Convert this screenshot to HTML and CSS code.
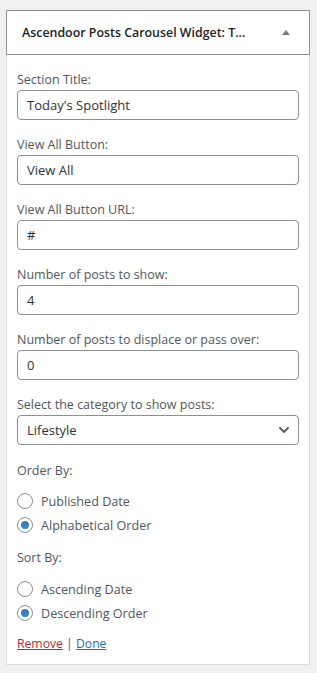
FILE: index.html
```html
<!DOCTYPE html>
<html lang="en">
<head>
<meta charset="utf-8">
<title>Widget</title>
<link rel="stylesheet" href="styles.css">
</head>
<body>
<div class="widget">
  <div class="widget-top">
    <h3 class="widget-title">Ascendoor Posts Carousel Widget: T...</h3>
    <span class="toggle"><svg width="8" height="5" viewBox="0 0 8 5"><path d="M0 5 L4 0 L8 5 Z" fill="#787c82"/></svg></span>
  </div>
  <div class="widget-inside">
    <div class="field">
      <label class="lbl">Section Title:</label>
      <div class="input">Today's Spotlight</div>
    </div>
    <div class="field">
      <label class="lbl">View All Button:</label>
      <div class="input">View All</div>
    </div>
    <div class="field">
      <label class="lbl">View All Button URL:</label>
      <div class="input">#</div>
    </div>
    <div class="field">
      <label class="lbl">Number of posts to show:</label>
      <div class="input">4</div>
    </div>
    <div class="field">
      <label class="lbl">Number of posts to displace or pass over:</label>
      <div class="input">0</div>
    </div>
    <div class="field">
      <label class="lbl">Select the category to show posts:</label>
      <div class="input select"><span>Lifestyle</span>
        <svg width="12" height="8" viewBox="0 0 12 8"><path d="M1.5 1.5 L6 6 L10.5 1.5" fill="none" stroke="#50575e" stroke-width="1.8"/></svg>
      </div>
    </div>
    <div class="group first">
      <div class="lbl">Order By:</div>
      <div class="radios">
        <div class="radio-row"><span class="radio"></span><span>Published Date</span></div>
        <div class="radio-row"><span class="radio checked"></span><span>Alphabetical Order</span></div>
      </div>
    </div>
    <div class="group">
      <div class="lbl">Sort By:</div>
      <div class="radios">
        <div class="radio-row"><span class="radio"></span><span>Ascending Date</span></div>
        <div class="radio-row"><span class="radio checked"></span><span>Descending Order</span></div>
      </div>
    </div>
    <div class="actions"><a class="remove" href="#">Remove</a> <span class="sep">|</span> <a class="done" href="#">Done</a></div>
  </div>
</div>
</body>
</html>
```
FILE: styles.css
```css
html, body {
  margin: 0;
  padding: 0;
  background: #f0f0f1;
}
body {
  padding: 10px 7px 0 6px;
  font-family: "Open Sans", "Noto Sans", sans-serif;
  color: #50575e;
}
.widget {
  width: 304px;
}
.widget-top {
  height: 43px;
  border: 1px solid #8c8f94;
  background: #fff;
  display: flex;
  align-items: center;
  justify-content: space-between;
  padding: 0 19px 0 15px;
}
.widget-title {
  margin: 0;
  font-size: 12.4px;
  font-weight: 600;
  color: #1d2327;
  white-space: nowrap;
}
.toggle {
  display: flex;
  align-items: center;
  margin-top: -1px;
}
.widget-inside {
  background: #fff;
  border: 1px solid #dcdcde;
  border-top: none;
  padding: 15px 10px 10px 10px;
  display: flex;
  flex-direction: column;
}
.field + .field {
  margin-top: 15px;
}
.lbl {
  display: block;
  font-size: 12.5px;
  line-height: 20px;
  color: #50575e;
}
.input {
  box-sizing: border-box;
  height: 30px;
  border: 1px solid #8c8f94;
  border-radius: 4px;
  padding: 0 9px;
  font-size: 13px;
  line-height: 28px;
  color: #2c3338;
  display: flex;
  align-items: center;
  justify-content: space-between;
}
.select svg {
  margin-right: -1px;
}
.group.first {
  margin-top: 16px;
}
.group {
  margin-top: 11px;
}
.radios {
  margin-top: 8px;
}
.group + .group .radios {
  margin-top: 9px;
}
.radio-row {
  height: 24px;
  display: flex;
  align-items: center;
  gap: 8px;
  font-size: 12.6px;
  color: #50575e;
}
.radio {
  box-sizing: border-box;
  width: 16px;
  height: 16px;
  border: 1px solid #8c8f94;
  border-radius: 50%;
  display: flex;
  align-items: center;
  justify-content: center;
  background: #fff;
}
.radio.checked::after {
  content: "";
  width: 8px;
  height: 8px;
  border-radius: 50%;
  background: #3582c4;
}
.actions {
  margin-top: 9px;
  font-size: 12.2px;
  line-height: 20px;
}
.remove {
  color: #b32d2e;
}
.done {
  color: #2271b1;
}
.sep {
  color: #50575e;
}
```
